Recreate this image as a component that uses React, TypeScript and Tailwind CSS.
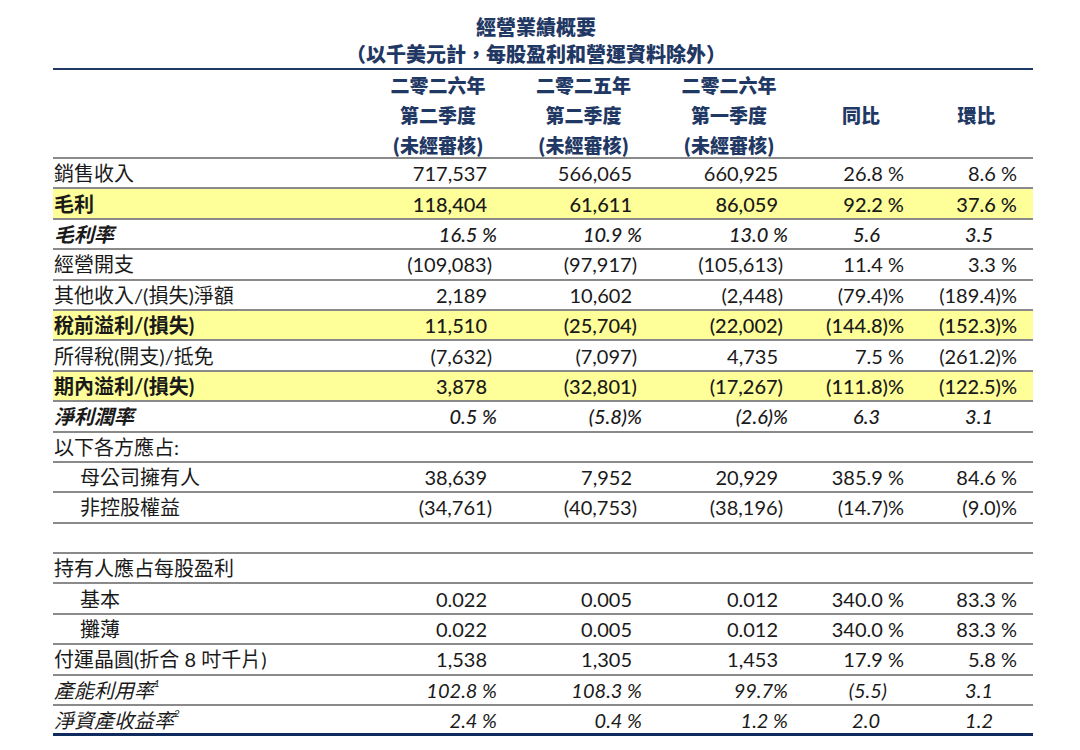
import React from 'react';

type Kind = 'normal' | 'bold' | 'boldItalic' | 'italic';

interface Row {
  label: string;
  sup?: string;
  kind?: Kind;
  indent?: boolean;
  yellow?: boolean;
  values?: string[];
}

const rows: Row[] = [
  { label: '銷售收入', values: ['717,537', '566,065', '660,925', '26.8 %', '8.6 %'] },
  { label: '毛利', kind: 'bold', yellow: true, values: ['118,404', '61,611', '86,059', '92.2 %', '37.6 %'] },
  { label: '毛利率', kind: 'boldItalic', values: ['16.5 %', '10.9 %', '13.0 %', '5.6', '3.5'] },
  { label: '經營開支', values: ['(109,083)', '(97,917)', '(105,613)', '11.4 %', '3.3 %'] },
  { label: '其他收入/(損失)淨額', values: ['2,189', '10,602', '(2,448)', '(79.4)%', '(189.4)%'] },
  { label: '稅前溢利/(損失)', kind: 'bold', yellow: true, values: ['11,510', '(25,704)', '(22,002)', '(144.8)%', '(152.3)%'] },
  { label: '所得稅(開支)/抵免', values: ['(7,632)', '(7,097)', '4,735', '7.5 %', '(261.2)%'] },
  { label: '期內溢利/(損失)', kind: 'bold', yellow: true, values: ['3,878', '(32,801)', '(17,267)', '(111.8)%', '(122.5)%'] },
  { label: '淨利潤率', kind: 'boldItalic', values: ['0.5 %', '(5.8)%', '(2.6)%', '6.3', '3.1'] },
  { label: '以下各方應占:' },
  { label: '母公司擁有人', indent: true, values: ['38,639', '7,952', '20,929', '385.9 %', '84.6 %'] },
  { label: '非控股權益', indent: true, values: ['(34,761)', '(40,753)', '(38,196)', '(14.7)%', '(9.0)%'] },
  { label: '' },
  { label: '持有人應占每股盈利' },
  { label: '基本', indent: true, values: ['0.022', '0.005', '0.012', '340.0 %', '83.3 %'] },
  { label: '攤薄', indent: true, values: ['0.022', '0.005', '0.012', '340.0 %', '83.3 %'] },
  { label: '付運晶圓(折合 8 吋千片)', values: ['1,538', '1,305', '1,453', '17.9 %', '5.8 %'] },
  { label: '產能利用率', sup: '1', kind: 'italic', values: ['102.8 %', '108.3 %', '99.7%', '(5.5)', '3.1'] },
  { label: '淨資產收益率', sup: '2', kind: 'italic', values: ['2.4 %', '0.4 %', '1.2 %', '2.0', '1.2'] },
];

const headers: string[][] = [
  ['二零二六年', '第二季度', '(未經審核)'],
  ['二零二五年', '第二季度', '(未經審核)'],
  ['二零二六年', '第一季度', '(未經審核)'],
  ['同比'],
  ['環比'],
];

const labelClass: Record<Kind, string> = {
  normal: 'font-normal not-italic',
  bold: 'font-bold not-italic',
  boldItalic: 'font-bold italic',
  italic: 'font-normal italic',
};

// figures in the highlighted rows are only a little heavier than the rest
const valueClass: Record<Kind, string> = {
  normal: 'font-normal not-italic',
  bold: 'font-medium not-italic',
  boldItalic: 'font-medium italic',
  italic: 'font-normal italic',
};

// right padding so that % signs, closing parens and plain figures line up like the report
const amountPad = { pct: 'pr-[14px]', paren: 'pr-[19px]', plain: 'pr-[24px]' };
const ratioPad = { pct: 'pr-[16px]', paren: 'pr-[33px]', plain: 'pr-[40px]' };

const padFor = (value: string, col: number) => {
  const pads = col < 3 ? amountPad : ratioPad;
  if (value.endsWith('%')) return pads.pct;
  if (value.endsWith(')')) return pads.paren;
  return pads.plain;
};

const grid = 'grid grid-cols-[312px_146px_145px_146px_118px_113px]';

const App: React.FC = () => {
  return (
    <div
      className="w-[1080px] h-[750px] bg-white text-[#1a1a1a]"
      style={{ fontFamily: 'Lato, "Noto Sans CJK TC", sans-serif' }}
    >
      <div className="ml-[53px] w-[980px]">
        {/* Title */}
        <div
          className="pt-[13px] pb-[1px] border-b-2 border-[#1f3864] text-[#1f3864] font-black text-[20px] leading-[27px] text-center pr-[14px]"
          style={{ fontFamily: '"Noto Sans CJK TC", sans-serif' }}
        >
          <div>經營業績概要</div>
          <div>（以千美元計，每股盈利和營運資料除外）</div>
        </div>

        {/* Column headers */}
        <div
          className={`${grid} h-[89px] border-b-2 border-[#8a8a8a] text-[#1f3864] font-black text-[19px] leading-[30px]`}
          style={{ fontFamily: '"Noto Sans CJK TC", sans-serif' }}
        >
          <div />
          {headers.map((lines, i) => (
            <div key={i} className="flex flex-col items-center justify-center">
              {lines.map((line) => (
                <div key={line}>{line}</div>
              ))}
            </div>
          ))}
        </div>

        {/* Body rows */}
        {rows.map((row, idx) => {
          const last = idx === rows.length - 1;
          const kind = row.kind ?? 'normal';
          return (
            <div
              key={idx}
              className={`${grid} h-[30.4px] ${
                last ? 'border-b-[3px] border-[#0f2a5c]' : 'border-b-2 border-[#8a8a8a]'
              } ${row.yellow ? 'bg-[#ffff99]' : ''}`}
            >
              <div
                className={`flex items-center text-[20px] leading-none whitespace-nowrap ${labelClass[kind]} ${
                  row.indent ? 'pl-[27px]' : 'pl-[1px]'
                }`}
              >
                {row.label}
                {row.sup && <sup className="text-[10px] -translate-y-[2px]">{row.sup}</sup>}
              </div>
              {(row.values ?? ['', '', '', '', '']).map((v, c) => (
                <div
                  key={c}
                  className={`flex items-center justify-end text-[20px] leading-none whitespace-nowrap ${valueClass[kind]} ${padFor(v, c)}`}
                >
                  {v}
                </div>
              ))}
            </div>
          );
        })}
      </div>
    </div>
  );
};

export default App;
